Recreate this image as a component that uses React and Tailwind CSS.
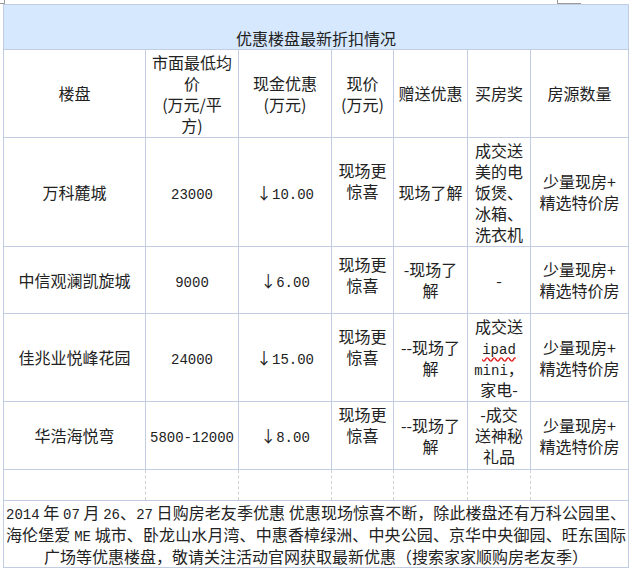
import React from 'react';

const cellBase = 'border border-[#c2cde4] text-center align-middle px-[2px] py-0';
const mono = "font-['Liberation_Mono',monospace] text-[14px] leading-[16px]";

const rows = [
  {
    name: '万科麓城',
    price: '23000',
    cash: '10.00',
    now: ['现场更', '惊喜'],
    nowPad: 'pb-[22px]',
    gift: ['现场了解'],
    prize: ['成交送', '美的电', '饭煲、', '冰箱、', '洗衣机'],
    h: 'h-[109px]',
  },
  {
    name: '中信观澜凯旋城',
    price: '9000',
    cash: '6.00',
    now: ['现场更', '惊喜'],
    nowPad: 'pb-[11px]',
    gift: ['-现场了', '解'],
    prize: ['-'],
    h: 'h-[67px]',
  },
  {
    name: '佳兆业悦峰花园',
    price: '24000',
    cash: '15.00',
    now: ['现场更', '惊喜'],
    nowPad: 'pb-[22px]',
    gift: ['--现场了', '解'],
    prize: null,
    h: 'h-[88px]',
  },
  {
    name: '华浩海悦弯',
    price: '5800-12000',
    cash: '8.00',
    now: ['现场更', '惊喜'],
    nowPad: 'pb-[22px]',
    gift: ['--现场了', '解'],
    prize: ['-成交', '送神秘', '礼品'],
    h: 'h-[68px]',
  },
];

const Lines = ({ lines }) =>
  lines.map((l, i) => (
    <div key={i}>{l}</div>
  ));

const App = () => {
  return (
    <div className="relative w-[630px] h-[570px] overflow-hidden bg-white pl-[3px] pt-[4px] text-[#222] text-[16px] leading-[21px] font-['Noto_Sans_CJK_SC',sans-serif]">
      {/* editor corner marks */}
      <span className="absolute left-0 top-[3px] w-[4px] h-px bg-[#9a9a9a]" />
      <span className="absolute left-[4px] top-0 w-px h-[4px] bg-[#9a9a9a]" />
      <span className="absolute left-[557px] top-[3px] w-[24px] h-px bg-[#9a9a9a]" />
      <span className="absolute left-[557px] top-0 w-px h-[4px] bg-[#9a9a9a]" />

      <table className="table-fixed border-collapse w-[625px]">
        <colgroup>
          <col className="w-[142px]" />
          <col className="w-[93px]" />
          <col className="w-[93px]" />
          <col className="w-[62px]" />
          <col className="w-[74px]" />
          <col className="w-[63px]" />
          <col className="w-[98px]" />
        </colgroup>
        <tbody>
          <tr>
            <td colSpan={7} className={`${cellBase} !align-bottom h-[45px] bg-[#d6e8fe]`}>
              优惠楼盘最新折扣情况
            </td>
          </tr>
          <tr>
            <td className={`${cellBase} h-[88px]`}>楼盘</td>
            <td className={cellBase}>
              <Lines lines={['市面最低均', '价', '(万元/平', '方)']} />
            </td>
            <td className={cellBase}>
              <Lines lines={['现金优惠', '(万元)']} />
            </td>
            <td className={cellBase}>
              <Lines lines={['现价', '(万元)']} />
            </td>
            <td className={cellBase}>赠送优惠</td>
            <td className={cellBase}>买房奖</td>
            <td className={cellBase}>房源数量</td>
          </tr>

          {rows.map((r) => (
            <tr key={r.name}>
              <td className={`${cellBase} ${r.h}`}>{r.name}</td>
              <td className={cellBase}>
                <span className={mono}>{r.price}</span>
              </td>
              <td className={cellBase}>
                <span>↓</span>
                <span className={mono}>{r.cash}</span>
              </td>
              <td className={`${cellBase} ${r.nowPad}`}>
                <Lines lines={r.now} />
              </td>
              <td className={cellBase}>
                <Lines lines={r.gift} />
              </td>
              <td className={cellBase}>
                {r.prize ? (
                  <Lines lines={r.prize} />
                ) : (
                  <>
                    <div>成交送</div>
                    <div>
                      <span className={`${mono} underline decoration-wavy decoration-[#e02020] underline-offset-[3px]`}>ipad</span>
                    </div>
                    <div>
                      <span className={mono}>mini</span>，
                    </div>
                    <div>家电-</div>
                  </>
                )}
              </td>
              <td className={cellBase}>
                <Lines lines={['少量现房+', '精选特价房']} />
              </td>
            </tr>
          ))}

          <tr>
            {[0, 1, 2, 3, 4, 5, 6].map((i) => (
              <td
                key={i}
                className="h-[31px] p-0 border-y border-y-[#c2cde4] border-x border-dashed border-x-[#d0d0d0] first:border-l-[#c2cde4] last:border-r-[#c2cde4]"
                style={i === 0 ? { borderLeftStyle: 'solid' } : i === 6 ? { borderRightStyle: 'solid' } : undefined}
              />
            ))}
          </tr>

          <tr>
            <td colSpan={7} className="border border-[#c2cde4] h-[67px] px-[2px] py-0 leading-[22px] align-middle">
              <div className="whitespace-nowrap text-justify [text-align-last:justify]">
                <span className={mono}>2014</span> 年 <span className={mono}>07</span> 月 <span className={mono}>26</span>、<span className={mono}>27</span> 日购房老友季优惠 优惠现场惊喜不断，除此楼盘还有万科公园里、
              </div>
              <div className="whitespace-nowrap text-justify [text-align-last:justify]">
                海伦堡爱 <span className={mono}>ME</span> 城市、卧龙山水月湾、中惠香樟绿洲、中央公园、京华中央御园、旺东国际
              </div>
              <div className="whitespace-nowrap text-center">
                广场等优惠楼盘，敬请关注活动官网获取最新优惠（搜索家家顺购房老友季）
              </div>
            </td>
          </tr>
        </tbody>
      </table>
    </div>
  );
};

export default App;
